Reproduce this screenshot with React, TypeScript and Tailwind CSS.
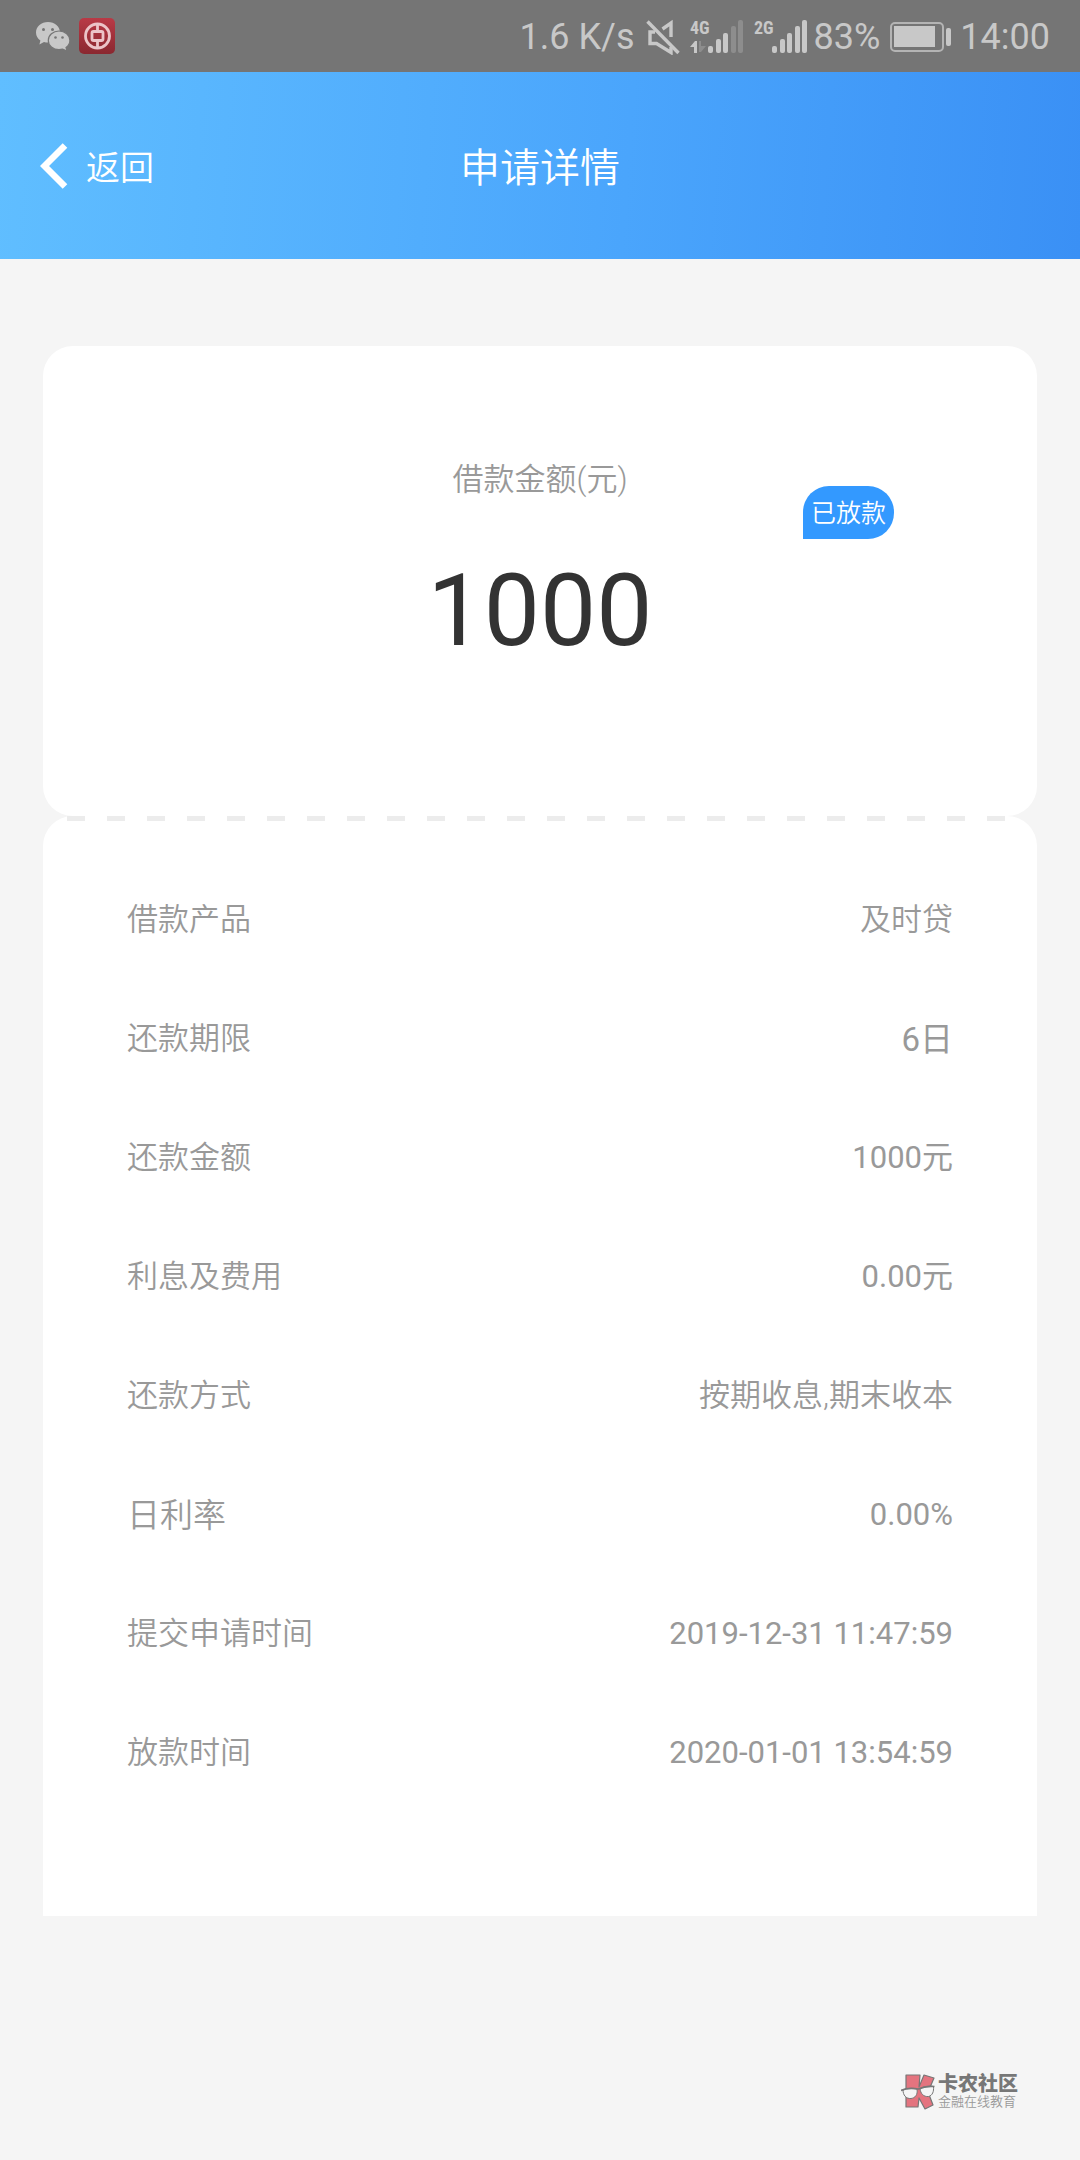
type DetailRow = {
  label: string;
  value: string;
  labelClass?: string;
  valueClass?: string;
};

const rows: DetailRow[] = [
  { label: "借款产品", value: "及时贷" },
  { label: "还款期限", value: "6日", valueClass: "text-[33px] font-normal" },
  { label: "还款金额", value: "1000元", valueClass: "font-normal" },
  { label: "利息及费用", value: "0.00元", valueClass: "font-normal" },
  { label: "还款方式", value: "按期收息,期末收本" },
  { label: "日利率", value: "0.00%", labelClass: "text-[33px]", valueClass: "font-normal" },
  { label: "提交申请时间", value: "2019-12-31 11:47:59", valueClass: "font-normal" },
  { label: "放款时间", value: "2020-01-01 13:54:59", valueClass: "font-normal" },
];

function WechatIcon() {
  return (
    <svg width="34" height="30" viewBox="0 0 34 30" aria-hidden="true">
      <path
        fill="#c8c8c8"
        d="M12 1C5.400 1 0 5.500 0 11.500c0 3.400 1.700 6.200 4.400 8.100L3.400 23.500l4.600-2.500c1.300.4 2.600.6 4 .6C18.600 21.500 24 17 24 11.300 24 5.500 18.600 1 12 1z"
      />
      <path
        fill="#c8c8c8"
        stroke="#757575"
        strokeWidth="1.200"
        d="M23 10c-6 0-10.700 4.200-10.700 9.400S17 28.600 23 28.600c1.300 0 2.500-.2 3.600-.5l4.600 2-1.200-3.700c2.400-1.700 3.900-4.200 3.900-7C33.900 14.200 29 10 23 10z"
      />
      <circle cx="7.500" cy="8.500" r="1.500" fill="#757575" />
      <circle cx="16.500" cy="8.500" r="1.500" fill="#757575" />
      <circle cx="19.500" cy="16.500" r="1.300" fill="#757575" />
      <circle cx="26.500" cy="16.500" r="1.300" fill="#757575" />
    </svg>
  );
}

function BankIcon() {
  return (
    <svg width="36" height="36" viewBox="0 0 36 36" fill="none" aria-hidden="true">
      <defs>
        <linearGradient id="bank" x1="0" y1="0" x2="0" y2="1">
          <stop offset="0" stopColor="#b93a46" />
          <stop offset="1" stopColor="#8a2830" />
        </linearGradient>
      </defs>
      <rect width="36" height="36" rx="5" fill="url(#bank)" />
      <circle cx="18.500" cy="18" r="12" stroke="#ecc4c8" strokeWidth="2.800" />
      <rect x="13" y="13.500" width="11" height="9" rx="1.500" stroke="#ecc4c8" strokeWidth="2.800" />
      <path d="M18.500 6v7M18.500 23v7" stroke="#ecc4c8" strokeWidth="2.800" />
    </svg>
  );
}

function MuteIcon() {
  return (
    <svg width="34" height="36" viewBox="0 0 34 36" fill="none" aria-hidden="true">
      <path d="M9 13H4v11.500h6.500L25 33.500V28" stroke="#c8c8c8" strokeWidth="3.400" />
      <path d="M16.500 10 25 4v14" stroke="#c8c8c8" strokeWidth="3.400" />
      <path d="M1.500 2.500 32.500 34" stroke="#c8c8c8" strokeWidth="3.400" />
    </svg>
  );
}

type SignalProps = {
  label: string;
  level: number;
  showTraffic?: boolean;
};

const bars = [
  { x: 18, h: 7 },
  { x: 26, h: 14 },
  { x: 33, h: 20 },
  { x: 41, h: 27 },
  { x: 48, h: 33 },
];

function SignalIcon({ label, level, showTraffic }: SignalProps) {
  return (
    <svg width="54" height="44" viewBox="0 -4 54 44" role="img" aria-label={label}>
      <text
        x="0"
        y="15"
        fill="#c8c8c8"
        className="font-['Roboto_Condensed','Liberation_Sans_Narrow','Roboto',sans-serif] text-[18px] font-bold"
      >
        {label}
      </text>
      {showTraffic && (
        <>
          <path d="M0 28l5-6h2v12H4v-6z" fill="#c8c8c8" />
          <path d="M9 22h2v5h5l-5 6H9z" fill="#8d8d8d" />
        </>
      )}
      {bars.map((bar, i) => (
        <rect
          key={bar.x}
          x={bar.x}
          y={34 - bar.h}
          width="5"
          height={bar.h}
          rx="2"
          fill={i < level ? "#c8c8c8" : "#8d8d8d"}
        />
      ))}
    </svg>
  );
}

function BatteryIcon() {
  return (
    <svg width="62" height="30" viewBox="0 0 62 30" fill="none" aria-hidden="true">
      <rect x="1" y="1" width="52" height="28" rx="4" stroke="#b4b4b4" strokeWidth="2" />
      <rect x="4" y="4" width="41" height="21" fill="#c8c8c8" />
      <rect x="56" y="6" width="5" height="18" rx="2" fill="#c8c8c8" />
    </svg>
  );
}

function StatusBar() {
  return (
    <div className="flex h-[72px] items-center justify-between bg-[#757575] pl-9 pr-[30px] text-[36px] leading-none text-[#c8c8c8]">
      <div className="flex items-center gap-[9px]">
        <WechatIcon />
        <BankIcon />
      </div>
      <div className="flex items-center pt-0.5">
        <span>1.6 K/s</span>
        <span className="ml-[11px] flex items-center gap-2.5">
          <MuteIcon />
          <SignalIcon label="4G" level={3} showTraffic />
          <SignalIcon label="2G" level={5} />
        </span>
        <span className="ml-1.5">83%</span>
        <span className="ml-2.5 mr-2">
          <BatteryIcon />
        </span>
        <span>14:00</span>
      </div>
    </div>
  );
}

function WatermarkLogo() {
  return (
    <svg width="34" height="36" viewBox="0 0 34 36" aria-hidden="true">
      <path
        d="M5 1h14l-1 12 5-12 10 3-6 14 5 13-8 4-6-11-1 9H5z"
        fill="#e4747f"
        stroke="#777"
        strokeWidth="1.200"
        strokeLinejoin="round"
      />
      <path
        d="M2 16c4-2 10-2 14-1 1 6-2 9-6 9.500C5 25 2 21 2 16z"
        fill="#f5f5f5"
        stroke="#777"
        strokeWidth="1"
      />
      <path
        d="M19 14.500c4-2 9-3 13.500-2 .5 5-1 9-5 10-5 .5-8-3-8.500-8z"
        fill="#f5f5f5"
        stroke="#777"
        strokeWidth="1"
      />
      <path d="M0 16.500c5-2.500 11-2.500 17.500-1.500 4-2 10-3 16-2.500" stroke="#777" strokeWidth="1.600" fill="none" />
    </svg>
  );
}

export default function App() {
  return (
    <div className="flex min-h-screen flex-col bg-[#f5f5f5] font-['Roboto','Noto_Sans_CJK_SC',sans-serif]">
      <StatusBar />

      <header className="grid h-[187px] grid-cols-3 items-center bg-[linear-gradient(94deg,#60beff,#4aa5fc_58%,#3a90f5)] px-10 text-white">
        <button type="button" className="flex items-center gap-[18px] justify-self-start text-[34px] font-[350]">
          <svg width="28" height="46" viewBox="0 0 28 46" fill="none" aria-hidden="true">
            <path d="M25 2.500 4.500 23 25 43.500" stroke="currentColor" strokeWidth="6.500" />
          </svg>
          <span className="pt-1.5">返回</span>
        </button>
        <h1 className="pt-1.5 text-center text-[40px] font-[350]">申请详情</h1>
      </header>

      <main className="mx-[43px] mt-[87px]">
        <section className="relative flex h-[470px] flex-col items-center rounded-[30px] bg-white pt-[111px]">
          <p className="text-[31px] leading-[46px] font-[350] text-[#999]">借款金额(元)</p>
          <p className="mt-[48px] text-[100px] leading-[120px] text-[#333]">1000</p>
          <span className="absolute right-[143px] top-[140px] rounded-[26px] rounded-bl-none bg-[#3399ff] px-2 pt-0.5 text-[25px] leading-[51px] font-[350] text-white">
            已放款
          </span>
        </section>

        <section className="rounded-t-[30px] bg-white pb-[103px]">
          <div className="mx-6 h-[5px] bg-[repeating-linear-gradient(90deg,#ececec_0_18px,transparent_18px_40px)]" />
          <dl className="px-[84px] pt-10 text-[31px] font-[350] text-[#999]">
            {rows.map((row) => (
              <div key={row.label} className="flex h-[119px] items-center justify-between">
                <dt className={row.labelClass}>{row.label}</dt>
                <dd className={row.valueClass}>{row.value}</dd>
              </div>
            ))}
          </dl>
        </section>
      </main>

      <footer className="mt-auto flex items-center justify-end gap-[3px] pb-[50px] pr-[62px]">
        <WatermarkLogo />
        <div>
          <p className="text-[20px] leading-[20px] font-black text-[#777]">卡农社区</p>
          <p className="text-[13px] leading-[16px] font-[350] text-[#999]">金融在线教育</p>
        </div>
      </footer>
    </div>
  );
}
